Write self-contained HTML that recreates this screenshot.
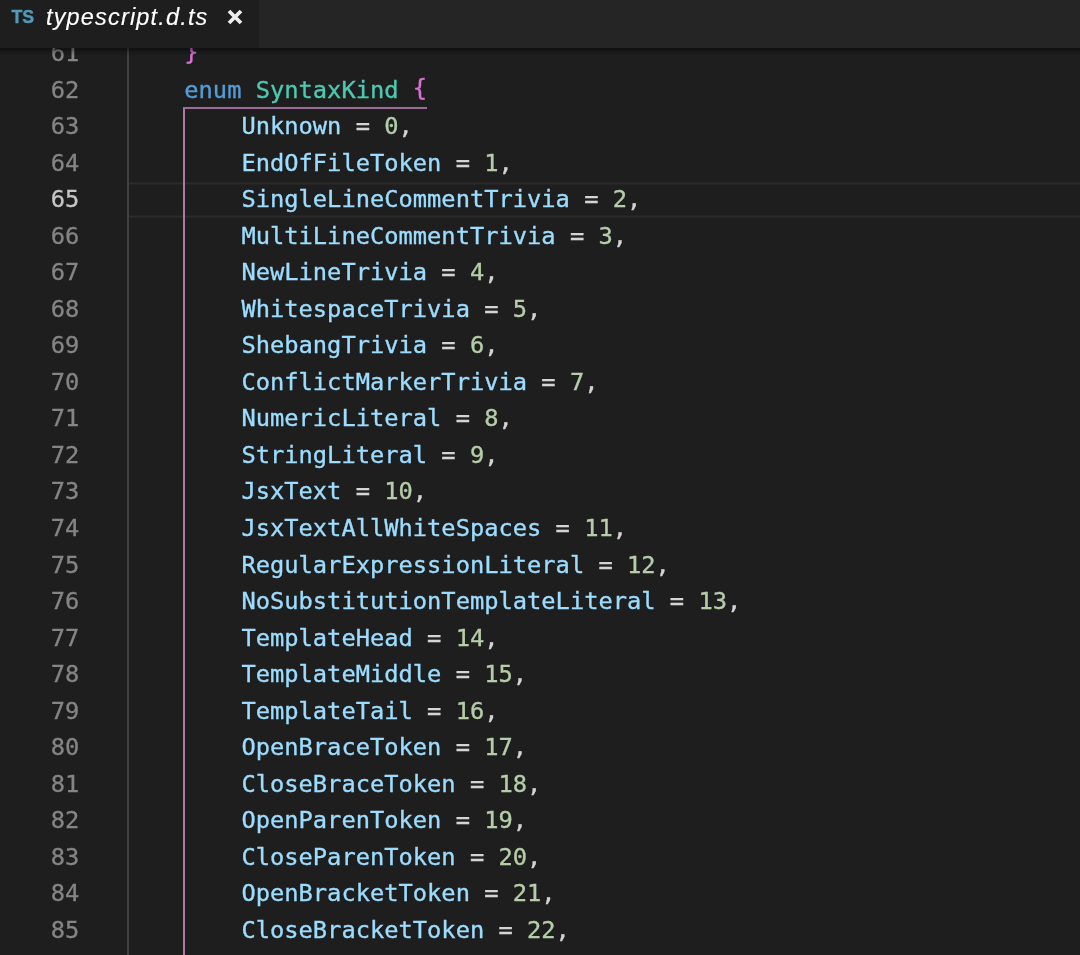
<!DOCTYPE html>
<html lang="en">
<head>
<meta charset="utf-8">
<title>typescript.d.ts</title>
<style>
html,body{margin:0;padding:0;}
body{width:1080px;height:955px;overflow:hidden;background:#1e1e1e;position:relative;font-family:"DejaVu Sans Mono","Liberation Mono",monospace;}
#editor{will-change:transform;position:absolute;left:0;top:0;width:1080px;height:955px;overflow:hidden;background:#1e1e1e;}
.ln{-webkit-text-stroke:0.3px currentColor;position:absolute;left:0;width:79.3px;text-align:right;color:#858585;font-size:23.72px;line-height:36.52px;height:36.52px;white-space:pre;}
.ln.act{color:#c6c6c6;}
.code{-webkit-text-stroke:0.35px currentColor;position:absolute;left:127.2px;color:#d4d4d4;font-size:23.72px;line-height:36.52px;height:36.52px;white-space:pre;}
.kw{color:#569cd6;}
.ty{color:#4ec9b0;}
.id{color:#9cdcfe;}
.num{color:#b5cea8;}
.b2{color:#da70d6;position:relative;top:-1.5px;}
#guide1{position:absolute;left:127px;top:0;width:2px;height:955px;background:#404040;}
#bg-v{position:absolute;left:183px;top:107px;width:2px;height:860px;background:#a87ba5;}
#bg-h{position:absolute;left:183px;top:107px;width:244px;height:2px;background:#9a6c96;}
#curline{position:absolute;left:127px;top:182px;width:953px;height:36px;background:linear-gradient(to bottom,#242424 0,#242424 1px,#2b2b2b 1px,#2b2b2b 2px,#242424 2px,#242424 3px,transparent 3px,transparent 33px,#242424 33px,#242424 34px,#2b2b2b 34px,#2b2b2b 35px,#242424 35px,#242424 36px);}
#tabs{will-change:transform;position:absolute;left:0;top:0;width:1080px;height:48px;background:#252526;}
#tab{position:absolute;left:0;top:0;width:259px;height:48px;background:#1e1e1e;}
#shadow{position:absolute;left:0;top:48px;width:1080px;height:8px;background:linear-gradient(to bottom, rgba(0,0,0,.40) 0, rgba(0,0,0,.38) 1.5px, rgba(0,0,0,.2) 3.5px, rgba(0,0,0,.08) 6px, rgba(0,0,0,0) 8px);}
#ts{position:absolute;left:11.5px;top:7px;font:bold 17.8px/20px "Liberation Sans",sans-serif;color:#519aba;-webkit-text-stroke:0.35px #519aba;}
#title{position:absolute;left:46px;top:3px;font:italic 23.5px/28px "Liberation Sans",sans-serif;color:#ffffff;letter-spacing:1.17px;-webkit-text-stroke:0.15px #ffffff;}
#close{position:absolute;left:225.6px;top:8px;width:18px;height:18px;}
</style>
</head>
<body>
<div id="editor">
<div id="curline"></div>
<div id="guide1"></div>
<div id="bg-v"></div>
<div id="bg-h"></div>
<div class="ln" style="top:35.22px">61</div>
<div class="code" style="top:35.22px">    <span class="b2">}</span></div>
<div class="ln" style="top:71.74px">62</div>
<div class="code" style="top:71.74px">    <span class="kw">enum</span> <span class="ty">SyntaxKind</span> <span class="b2">{</span></div>
<div class="ln" style="top:108.26px">63</div>
<div class="code" style="top:108.26px">        <span class="id">Unknown</span> = <span class="num">0</span>,</div>
<div class="ln" style="top:144.78px">64</div>
<div class="code" style="top:144.78px">        <span class="id">EndOfFileToken</span> = <span class="num">1</span>,</div>
<div class="ln act" style="top:181.30px">65</div>
<div class="code" style="top:181.30px">        <span class="id">SingleLineCommentTrivia</span> = <span class="num">2</span>,</div>
<div class="ln" style="top:217.82px">66</div>
<div class="code" style="top:217.82px">        <span class="id">MultiLineCommentTrivia</span> = <span class="num">3</span>,</div>
<div class="ln" style="top:254.34px">67</div>
<div class="code" style="top:254.34px">        <span class="id">NewLineTrivia</span> = <span class="num">4</span>,</div>
<div class="ln" style="top:290.86px">68</div>
<div class="code" style="top:290.86px">        <span class="id">WhitespaceTrivia</span> = <span class="num">5</span>,</div>
<div class="ln" style="top:327.38px">69</div>
<div class="code" style="top:327.38px">        <span class="id">ShebangTrivia</span> = <span class="num">6</span>,</div>
<div class="ln" style="top:363.90px">70</div>
<div class="code" style="top:363.90px">        <span class="id">ConflictMarkerTrivia</span> = <span class="num">7</span>,</div>
<div class="ln" style="top:400.42px">71</div>
<div class="code" style="top:400.42px">        <span class="id">NumericLiteral</span> = <span class="num">8</span>,</div>
<div class="ln" style="top:436.94px">72</div>
<div class="code" style="top:436.94px">        <span class="id">StringLiteral</span> = <span class="num">9</span>,</div>
<div class="ln" style="top:473.46px">73</div>
<div class="code" style="top:473.46px">        <span class="id">JsxText</span> = <span class="num">10</span>,</div>
<div class="ln" style="top:509.98px">74</div>
<div class="code" style="top:509.98px">        <span class="id">JsxTextAllWhiteSpaces</span> = <span class="num">11</span>,</div>
<div class="ln" style="top:546.50px">75</div>
<div class="code" style="top:546.50px">        <span class="id">RegularExpressionLiteral</span> = <span class="num">12</span>,</div>
<div class="ln" style="top:583.02px">76</div>
<div class="code" style="top:583.02px">        <span class="id">NoSubstitutionTemplateLiteral</span> = <span class="num">13</span>,</div>
<div class="ln" style="top:619.54px">77</div>
<div class="code" style="top:619.54px">        <span class="id">TemplateHead</span> = <span class="num">14</span>,</div>
<div class="ln" style="top:656.06px">78</div>
<div class="code" style="top:656.06px">        <span class="id">TemplateMiddle</span> = <span class="num">15</span>,</div>
<div class="ln" style="top:692.58px">79</div>
<div class="code" style="top:692.58px">        <span class="id">TemplateTail</span> = <span class="num">16</span>,</div>
<div class="ln" style="top:729.10px">80</div>
<div class="code" style="top:729.10px">        <span class="id">OpenBraceToken</span> = <span class="num">17</span>,</div>
<div class="ln" style="top:765.62px">81</div>
<div class="code" style="top:765.62px">        <span class="id">CloseBraceToken</span> = <span class="num">18</span>,</div>
<div class="ln" style="top:802.14px">82</div>
<div class="code" style="top:802.14px">        <span class="id">OpenParenToken</span> = <span class="num">19</span>,</div>
<div class="ln" style="top:838.66px">83</div>
<div class="code" style="top:838.66px">        <span class="id">CloseParenToken</span> = <span class="num">20</span>,</div>
<div class="ln" style="top:875.18px">84</div>
<div class="code" style="top:875.18px">        <span class="id">OpenBracketToken</span> = <span class="num">21</span>,</div>
<div class="ln" style="top:911.70px">85</div>
<div class="code" style="top:911.70px">        <span class="id">CloseBracketToken</span> = <span class="num">22</span>,</div>
</div>
<div id="tabs"><div id="tab">
<span id="ts">TS</span>
<span id="title">typescript.d.ts</span>
<svg id="close" viewBox="0 0 18 18"><path d="M3 3 L15 15 M15 3 L3 15" stroke="#ececec" stroke-width="3.8" fill="none"/></svg>
</div></div>
<div id="shadow"></div>
</body>
</html>
